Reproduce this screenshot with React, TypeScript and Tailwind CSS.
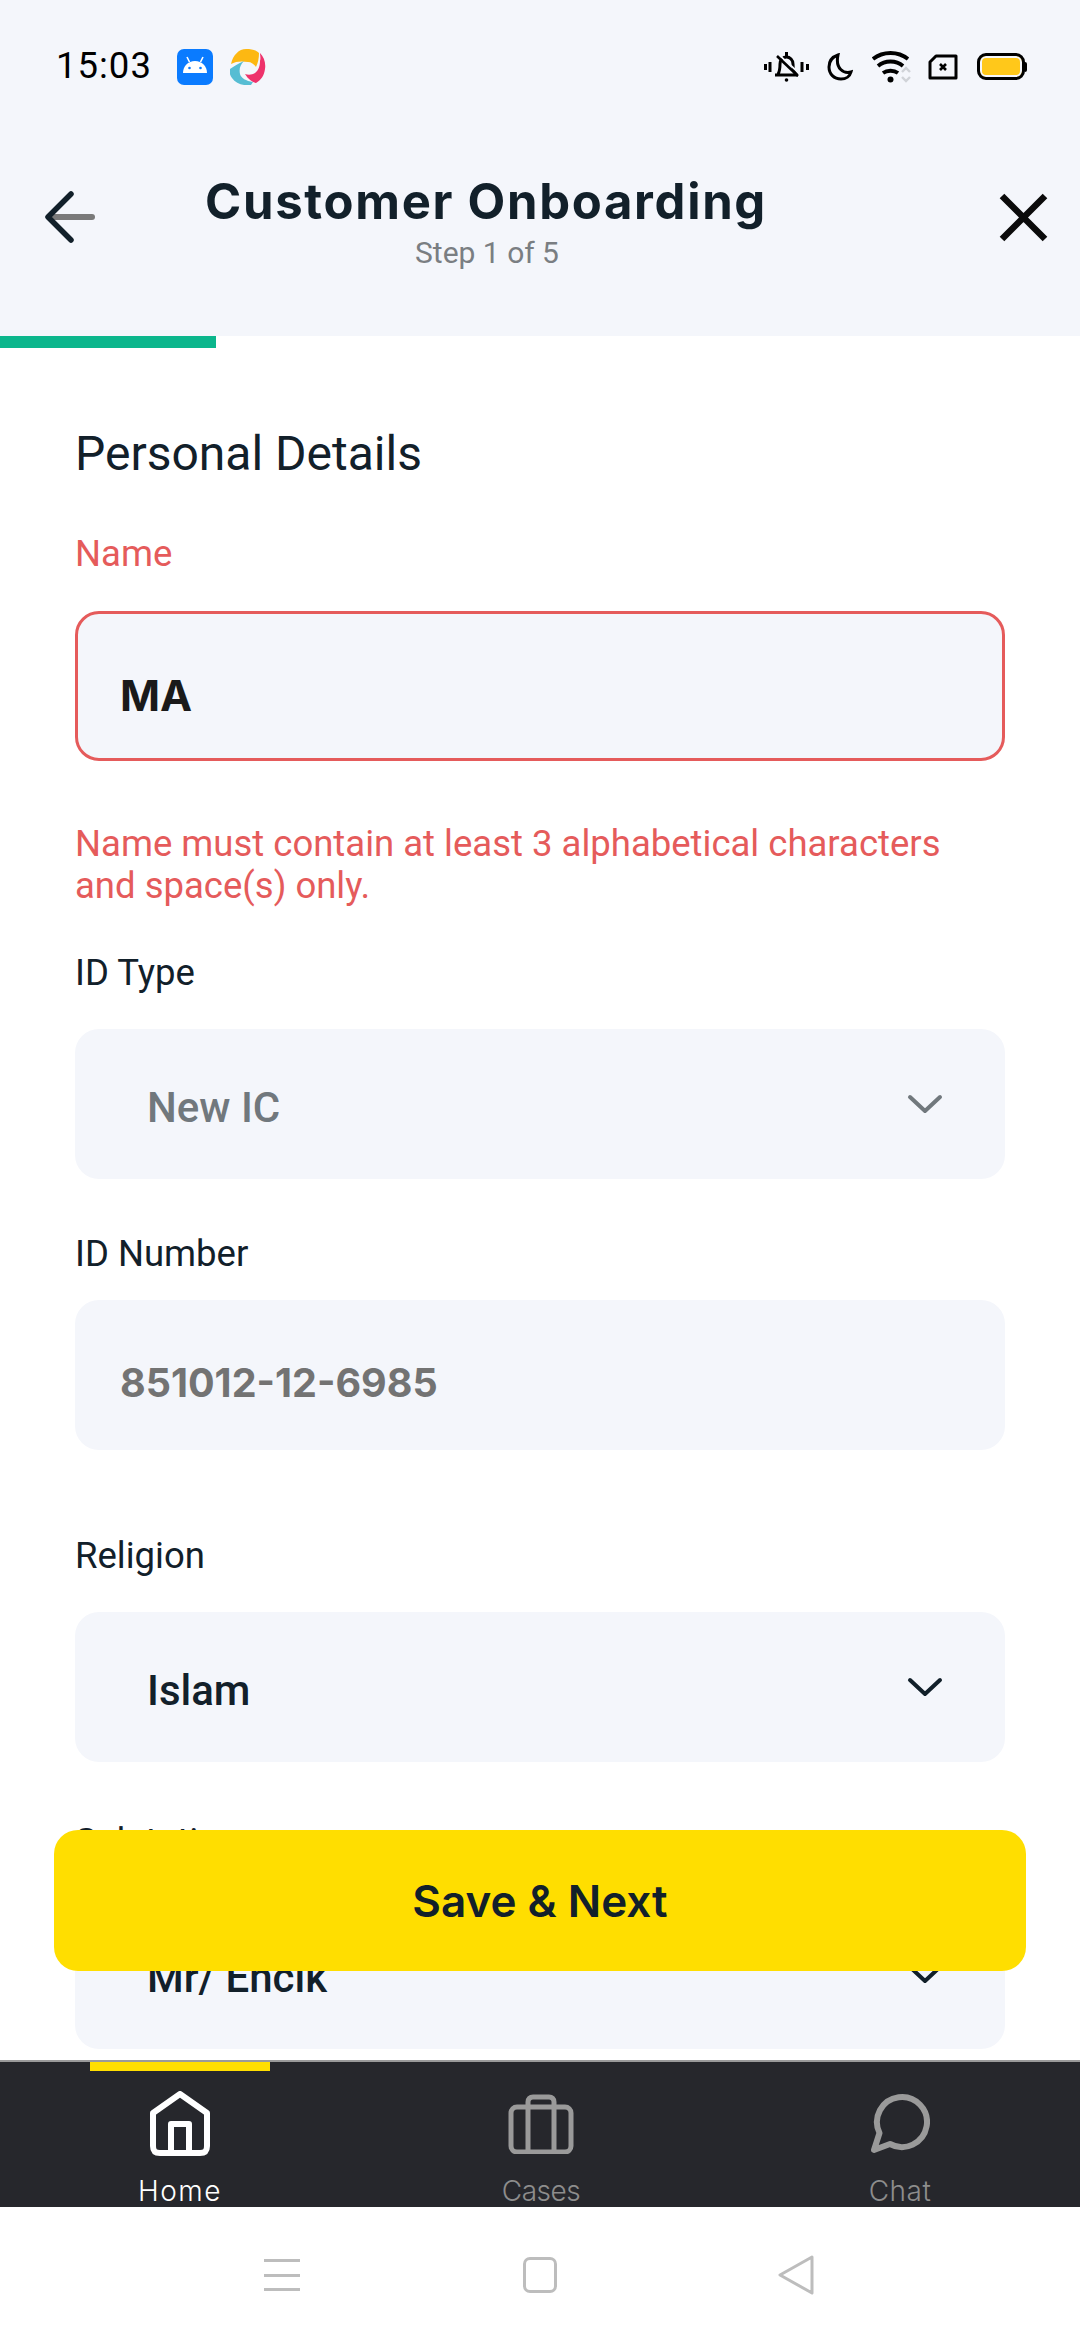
import React from "react";

const roboto = "font-['Roboto',sans-serif]";
const heading = "font-['Inter',sans-serif]";

function Chevron({ color }: { color: string }) {
  return (
    <svg width="36" height="24" viewBox="0 0 36 24" fill="none" stroke={color} strokeWidth="4" strokeLinecap="round" strokeLinejoin="round">
      <path d="M3 5l15 14L33 5" />
    </svg>
  );
}

function Label({ text, className }: { text: string; className: string }) {
  return <div className={`${roboto} text-[36.5px] leading-[42px] text-[#12202a] ${className}`}>{text}</div>;
}

function SelectField({ value, muted, className }: { value: string; muted?: boolean; className: string }) {
  return (
    <div className={`h-[150px] rounded-[24px] bg-[#f4f6fb] pl-[72px] pr-[62px] flex items-center justify-between ${className}`}>
      <span className={`${roboto} text-[42px] font-medium pt-[6px] ${muted ? "text-[#71787d]" : "text-[#12202a]"}`}>{value}</span>
      <Chevron color={muted ? "#71787d" : "#12202a"} />
    </div>
  );
}

function StatusIcons() {
  return (
    <div className="flex items-center">
      {/* vibrate, bell off */}
      <svg width="45" height="30" viewBox="0 0 45 30" fill="none" stroke="#000" strokeWidth="3">
        <path d="M1.500 12v6M6 10v10M38 10v10M43.500 12v6" />
        <path d="M11 23h23M14 22c2-3 2-6 2-10 0-4 3-7 6.500-7s6.500 3 6.500 7c0 4 0 7 3 10" />
        <path d="M22.500 0v4" />
        <path d="M15 3l20 18" stroke="#f4f6fb" strokeWidth="1.800" />
        <path d="M13 4l21 20" strokeWidth="2.600" />
        <circle cx="22.500" cy="28" r="1.800" fill="#000" stroke="none" />
      </svg>
      <svg className="ml-[18px]" width="26" height="28" viewBox="0 0 26 28" fill="none" stroke="#000" strokeWidth="3">
        <path d="M11 2C5 4 2 8 2 14c0 7 5 12 12 12 5 0 9-3 10-7-7 2-16-3-13-17z" />
      </svg>
      <svg className="ml-[19px]" width="40" height="32" viewBox="0 0 40 32">
        <g fill="none" stroke="#000" strokeWidth="3.800">
          <path d="M1 8c10-8 25-8 35 0" />
          <path d="M6 15c7-6 18-6 25 0" />
          <path d="M11 22c4-3 11-3 15 0" />
        </g>
        <circle cx="18.500" cy="28.500" r="3" fill="#000" />
        <path d="M30 21l4-4 4 4M30 26l4 4 4-4" fill="none" stroke="#d0d3d8" strokeWidth="2.400" />
      </svg>
      <svg className="ml-[16px]" width="30" height="26" viewBox="0 0 30 26" fill="none" stroke="#000" strokeWidth="3">
        <path d="M8 2h20v22H2V8z" strokeLinejoin="round" />
        <path d="M12 10l6 6M18 10l-6 6" strokeWidth="2.6" />
      </svg>
      <div className="ml-[19px] w-[48px] h-[27px] rounded-[9px] border-[3px] border-black bg-[#ffc81a] shadow-[inset_0_0_0_2px_#f4f6fb]" />
      <div className="w-[2px] h-[10px] bg-black rounded-r-full" />
    </div>
  );
}

export default function App() {
  return (
    <div className="relative w-[1080px] h-[2340px] overflow-hidden bg-white flex flex-col">
      <header className="h-[336px] shrink-0 bg-[#f4f6fb] flex flex-col">
        <div className="h-[133px] pl-[56px] pr-[53px] flex items-center justify-between">
          <div className="flex items-center">
            <span className={`${roboto} text-[36.5px] tracking-[1px] text-black`}>15:03</span>
            {/* android notification */}
            <svg className="ml-[25px]" width="36" height="36" viewBox="0 0 36 36">
              <rect width="36" height="36" rx="7" fill="#0a7bff" />
              <path d="M6 24c0-7 5-12 12-12s12 5 12 12z" fill="#fff" />
              <path d="M12.500 13L10 8M23.500 13L26 8" stroke="#fff" strokeWidth="1.600" />
              <circle cx="12.500" cy="19" r="1.300" fill="#0a7bff" />
              <circle cx="23.500" cy="19" r="1.300" fill="#0a7bff" />
            </svg>
            {/* swirl app icon */}
            <svg className="ml-[17px]" width="36" height="36" viewBox="0 0 36 36">
              <path d="M1 15C3 6 9 0 16 0c6 0 10 1 13 4 0 5-1 10-3 14-2-3-5-5-8-5-6-1-12-1-17 2z" fill="#fdb812" />
              <path d="M30 4c4 4 6 10 5 16-1 7-4 11-9 14-4-1-8-4-11-9 3 1 7 1 10-1 4-3 5-8 5-12 1-3 0-6 0-8z" fill="#ee326b" />
              <path d="M0 20C4 17 8 15 14 12c-4 4-5 8-4 13 1 4 6 7 13 8l-2 3c-7 1-15-1-19-7C0 27-1 23 0 20z" fill="#56bdd3" />
            </svg>
          </div>
          <StatusIcons />
        </div>
        <div className="relative h-[119px] flex items-start">
          <svg className="absolute left-[44px] top-[57px]" width="52" height="54" viewBox="0 0 52 54" fill="none" strokeLinecap="round" strokeLinejoin="round" strokeWidth="5.500">
            <path d="M10 27h38" stroke="#7a7a7a" strokeWidth="6" />
            <path d="M27 4L4 27l23 23" stroke="#12202a" />
          </svg>
          <div className="w-[972px] flex flex-col items-center">
            <h1 className={`${heading} text-[49px] leading-[56px] mt-[41px] font-bold tracking-[1.7px] text-[#12202a]`}>Customer Onboarding</h1>
            <div className={`${roboto} text-[30px] leading-[36px] mt-[5px] ml-[2px] text-[#7a7e82]`}>Step 1 of 5</div>
          </div>
          <svg className="absolute left-[999px] top-[60px]" width="49" height="49" viewBox="0 0 49 49" fill="none" stroke="#0b0b0b" strokeWidth="6.500">
            <path d="M3 3l43 43M46 3L3 46" />
          </svg>
        </div>
      </header>
      <div className="h-[12px] shrink-0 bg-white">
        <div className="h-full w-[216px] bg-[#0bb68c]" />
      </div>

      <main className="flex-1 overflow-hidden px-[75px]">
        <h2 className={`${roboto} text-[48px] leading-[54px] mt-[79px] text-[#12202a]`}>Personal Details</h2>
        <div className={`${roboto} text-[36.5px] leading-[42px] mt-[52px] text-[#e55b5b]`}>Name</div>
        <div className="mt-[36px] h-[150px] rounded-[24px] bg-[#f4f6fb] border-[3px] border-[#e55b5b] pl-[42px] pt-[18px] flex items-center">
          <span className={`${heading} text-[43px] font-bold text-[#1a1a1a]`}>MA</span>
        </div>
        <p className={`${roboto} text-[36.5px] leading-[42px] mt-[62px] text-[#e55b5b]`}>
          Name must contain at least 3 alphabetical characters
          <br />
          and space(s) only.
        </p>
        <Label text="ID Type" className="mt-[45px]" />
        <SelectField value="New IC" muted className="mt-[35px]" />
        <Label text="ID Number" className="mt-[54px]" />
        <div className="mt-[25px] h-[150px] rounded-[24px] bg-[#f4f6fb] pl-[45px] pt-[18px] flex items-center">
          <span className={`${heading} text-[39.5px] font-bold text-[#737373]`}>851012-12-6985</span>
        </div>
        <Label text="Religion" className="mt-[85px]" />
        <SelectField value="Islam" className="mt-[35px]" />
        <Label text="Salutation" className="mt-[59px]" />
        <SelectField value="Mr/ Encik" className="mt-[36px]" />
      </main>

      <button className={`${heading} absolute left-[54px] top-[1830px] w-[972px] h-[141px] rounded-[24px] bg-[#ffde00] text-[44px] font-semibold text-[#12202a]`}>
        Save &amp; Next
      </button>

      <nav className="h-[147px] shrink-0 bg-[#26272c] border-t-[2px] border-[#9a9a9a] grid grid-cols-3 relative">
        <div className="absolute left-[90px] top-0 w-[180px] h-[9px] bg-[#ffde00]" />
        <div className="flex flex-col items-center pt-[29px]">
          <svg width="60" height="66" viewBox="0 0 60 66" fill="none" stroke="#fff" strokeWidth="6" strokeLinejoin="round">
            <path d="M30 3L3 22v33c0 5 2 7 7 7h40c5 0 7-2 7-7V22z" />
            <path d="M21 62V33h18v29" />
          </svg>
          <span className={`${heading} text-[28px] font-light leading-[32px] tracking-[1.5px] mt-[18px] text-white`}>Home</span>
        </div>
        <div className="flex flex-col items-center pt-[32px] pl-[2px]">
          <svg width="66" height="60" viewBox="0 0 66 60" fill="none" stroke="#9a9a9a" strokeWidth="5" strokeLinejoin="round">
            <rect x="3" y="13" width="60" height="45" rx="6" />
            <path d="M20 13V8c0-3 2-5 5-5h16c3 0 5 2 5 5v5M20 13v45M46 13v45" />
          </svg>
          <span className={`${heading} text-[28px] font-light leading-[32px] tracking-[-0.5px] mt-[21px] text-[#8d8d8d]`}>Cases</span>
        </div>
        <div className="flex flex-col items-center pt-[32px]">
          <svg width="60" height="60" viewBox="0 0 60 60" fill="none" stroke="#9a9a9a" strokeWidth="6" strokeLinejoin="round">
            <path d="M9.500 39L4 56l16-6A25 25 0 1 0 9.500 39z" />
          </svg>
          <span className={`${heading} text-[28px] font-light leading-[32px] tracking-[0.5px] mt-[21px] text-[#8d8d8d]`}>Chat</span>
        </div>
      </nav>

      <div className="h-[133px] shrink-0 bg-white flex items-center justify-center relative">
        <div className="w-[36px] h-[32px] flex flex-col justify-between absolute left-[264px] top-[52px]">
          <div className="h-[3px] bg-[#bdbdbd]" />
          <div className="h-[3px] bg-[#bdbdbd]" />
          <div className="h-[3px] bg-[#bdbdbd]" />
        </div>
        <div className="w-[34px] h-[36px] rounded-[7px] border-[3px] border-[#bdbdbd] absolute left-[523px] top-[50px]" />
        <svg className="absolute left-[777px] top-[48px]" width="38" height="40" viewBox="0 0 38 40" fill="none" stroke="#bdbdbd" strokeWidth="3" strokeLinejoin="round">
          <path d="M35 2L3 20l32 18z" />
        </svg>
      </div>
    </div>
  );
}
